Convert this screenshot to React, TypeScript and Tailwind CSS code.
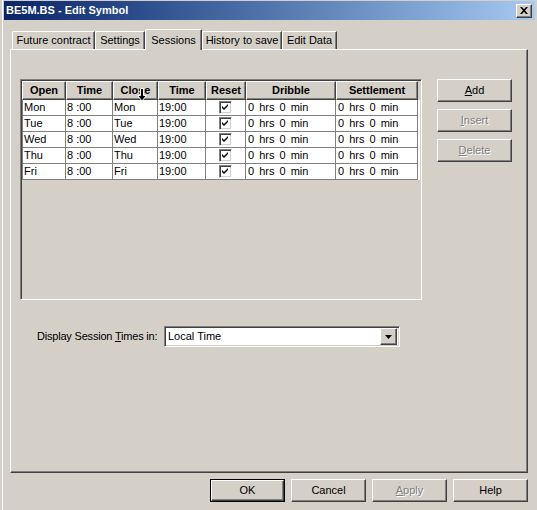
import React from 'react';

const raised =
  'border border-t-white border-l-white border-r-[#404040] border-b-[#404040] shadow-[inset_-1px_-1px_#808080]';
const sunken =
  'border border-t-[#808080] border-l-[#808080] border-b-white border-r-white shadow-[inset_1px_1px_#404040,inset_-1px_-1px_#d4d0c8]';
const disabledText = 'text-[#808080] [text-shadow:1px_1px_0_#ffffff]';

const cols = [44, 47, 45, 48, 40, 90, 82];
const headers = ['Open', 'Time', 'Close', 'Time', 'Reset', 'Dribble', 'Settlement'];
const days = [
  ['Mon', 'Mon'],
  ['Tue', 'Tue'],
  ['Wed', 'Wed'],
  ['Thu', 'Thu'],
  ['Fri', 'Fri'],
];

const tabs = [
  { label: 'Future contract', w: 83 },
  { label: 'Settings', w: 50 },
  { label: 'Sessions', w: 57, active: true },
  { label: 'History to save', w: 80 },
  { label: 'Edit Data', w: 55 },
];

function Check() {
  return (
    <div className={`w-[13px] h-[13px] bg-white ${sunken} flex items-center justify-center`}>
      <svg width="7" height="7" viewBox="0 0 7 7">
        <path d="M0 2 L2 4 L6 0 L6 2 L2 6 L0 4 Z" fill="#000" />
      </svg>
    </div>
  );
}

function Btn({
  children,
  disabled,
  isDefault,
}: {
  children: React.ReactNode;
  disabled?: boolean;
  isDefault?: boolean;
}) {
  const inner = (
    <div
      className={`flex-1 flex items-center justify-center bg-[#d4d0c8] ${raised} ${
        disabled ? disabledText : 'text-black'
      }`}
    >
      {children}
    </div>
  );
  if (isDefault) {
    return <div className="w-[75px] h-[23px] border border-black flex">{inner}</div>;
  }
  return <div className="w-[75px] h-[23px] flex">{inner}</div>;
}

export default function App() {
  return (
    <div className="w-[537px] h-[510px] bg-[#d4d0c8] overflow-hidden pl-[2px] font-['Liberation_Sans',Arial,sans-serif] text-[11px] text-black leading-none">
      <div className="h-full border-l border-white flex flex-col pt-[1px]">
        {/* title bar */}
        <div className="ml-px w-[531px] h-[19px] bg-linear-to-r from-[#0a246a] to-[#a6caf0] flex items-center pl-[2px] pr-[3px]">
          <span className="text-white font-bold text-[11px]">BE5M.BS - Edit Symbol</span>
          <div className={`ml-auto w-[16px] h-[14px] bg-[#d4d0c8] ${raised} flex items-center justify-center`}>
            <svg width="8" height="7" viewBox="0 0 8 7">
              <path d="M0 0h2l2 2.2L6 0h2L5 3.5 8 7H6L4 4.8 2 7H0l3-3.5z" fill="#000" />
            </svg>
          </div>
        </div>

        {/* tabs */}
        <div className="mt-[9px] ml-[9px] h-[20px] flex items-end relative z-10">
          {tabs.map((t) =>
            t.active ? (
              <div
                key={t.label}
                style={{ width: t.w }}
                className="h-[21px] -mb-px bg-[#d4d0c8] border-l border-t border-r border-l-white border-t-white border-r-[#404040] shadow-[inset_-1px_0_#808080] rounded-tl-[2px] flex items-start justify-center pt-[5px]"
              >
                {t.label}
              </div>
            ) : (
              <div
                key={t.label}
                style={{ width: t.w }}
                className="h-[18px] border-l border-t border-r border-l-white border-t-white border-r-[#404040] shadow-[inset_-1px_0_#808080] rounded-tl-[2px] flex items-center justify-center"
              >
                {t.label}
              </div>
            )
          )}
        </div>

        {/* panel */}
        <div className="ml-[7px] w-[518px] h-[424px] border-l border-t border-l-white border-t-white border-r border-b border-r-[#404040] border-b-[#404040] shadow-[inset_-1px_-1px_#808080] flex flex-col">
          <div className="flex pt-[29px] pl-[9px]">
            {/* grid frame */}
            <div className={`w-[402px] h-[221px] ${sunken} p-px`}>
              <div className="flex flex-col">
                <div className="flex">
                  {headers.map((h, i) => (
                    <div
                      key={i}
                      style={{ width: cols[i] }}
                      className={`relative h-[19px] ${raised} font-bold flex items-center justify-center`}
                    >
                      {h}
                      {h === 'Close' && (
                        <svg
                          className="absolute left-[23px] top-[6px]"
                          width="10"
                          height="14"
                          viewBox="0 0 10 14"
                        >
                          <path
                            d="M3.5 0.5h3v7h3l-4.5 5.5-4.5-5.5h3z"
                            fill="#000"
                            stroke="#fff"
                            strokeWidth="1"
                          />
                        </svg>
                      )}
                    </div>
                  ))}
                </div>
                {days.map(([open, close]) => (
                  <div key={open} className="flex bg-white">
                    {cols.map((w, i) => (
                      <div
                        key={i}
                        style={{ width: w }}
                        className={`h-[16px] border-r border-b border-[#808080] ${
                          i === 0 ? 'border-l' : ''
                        } flex items-center ${i === 4 ? 'justify-center' : 'pl-[1px]'} ${
                          i === 5 || i === 6 ? 'pl-[2px] [word-spacing:2px]' : ''
                        } whitespace-nowrap overflow-hidden`}
                      >
                        {i === 0 && open}
                        {i === 1 && '8 :00'}
                        {i === 2 && close}
                        {i === 3 && '19:00'}
                        {i === 4 && <Check />}
                        {(i === 5 || i === 6) && '0 hrs 0 min'}
                      </div>
                    ))}
                  </div>
                ))}
              </div>
            </div>

            {/* side buttons */}
            <div className="ml-[15px] flex flex-col gap-[7px]">
              <Btn>
                <span>
                  <u>A</u>dd
                </span>
              </Btn>
              <Btn disabled>
                <span>
                  <u>I</u>nsert
                </span>
              </Btn>
              <Btn disabled>
                <span>
                  <u>D</u>elete
                </span>
              </Btn>
            </div>
          </div>

          {/* display session times */}
          <div className="flex items-center mt-[26px] pl-[26px]">
            <span className="w-[127px] tracking-[-0.2px]">
              Display Session <u>T</u>imes in:
            </span>
            <div className={`w-[236px] h-[21px] bg-white ${sunken} flex items-center pl-[3px] pr-[2px]`}>
              <span>Local Time</span>
              <div className={`ml-auto w-[17px] h-[17px] bg-[#d4d0c8] ${raised} flex items-center justify-center`}>
                <svg width="7" height="4" viewBox="0 0 7 4">
                  <path d="M0 0h7L3.5 4z" fill="#000" />
                </svg>
              </div>
            </div>
          </div>
        </div>

        {/* dialog buttons */}
        <div className="ml-[7px] w-[518px] mt-[6px] flex justify-end gap-[6px]">
          <Btn isDefault>OK</Btn>
          <Btn>Cancel</Btn>
          <Btn disabled>
            <span>
              <u>A</u>pply
            </span>
          </Btn>
          <Btn>Help</Btn>
        </div>
      </div>
    </div>
  );
}
